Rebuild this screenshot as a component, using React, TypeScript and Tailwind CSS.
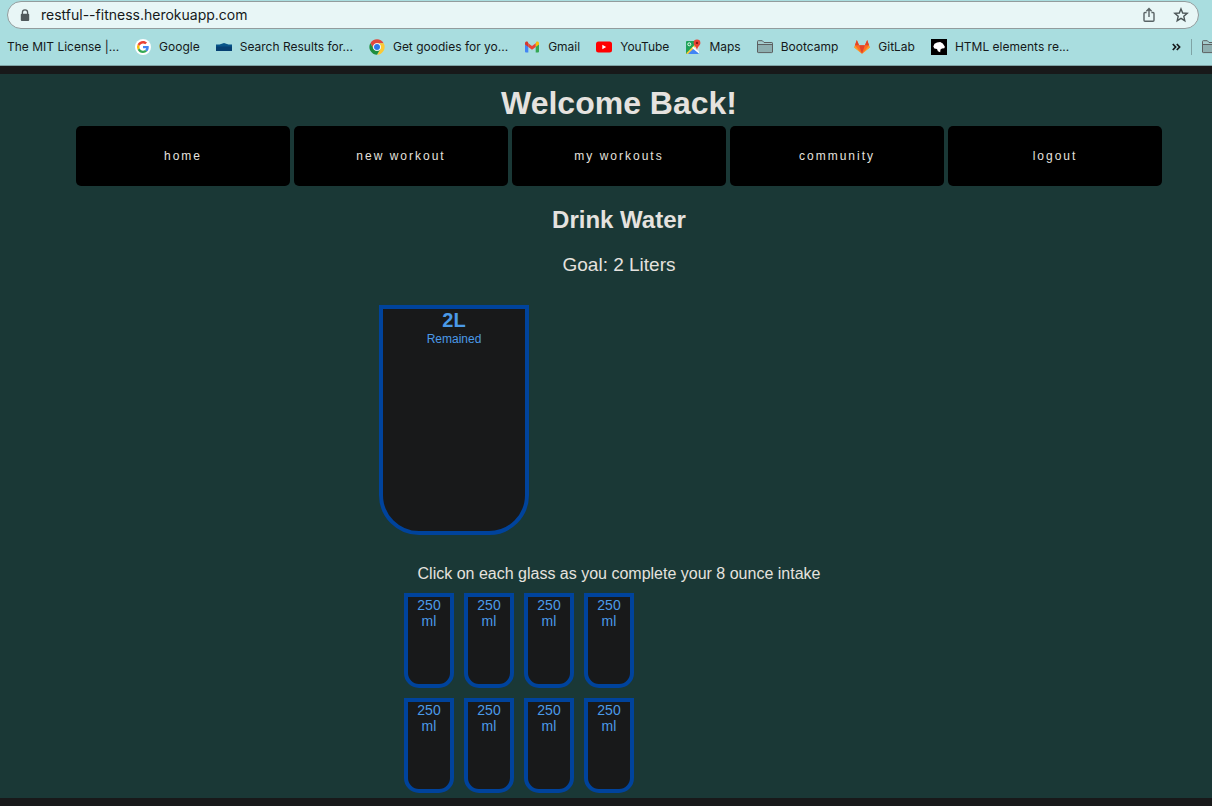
import type { ReactNode } from "react";

const ui = "font-['Inter','Noto_Sans',sans-serif]";

function LockIcon() {
  return (
    <svg width="10" height="13" viewBox="0 0 10 13" aria-hidden="true">
      <path d="M2.4 6V3.500a2.600 2.600 0 0 1 5.200 0V6" fill="none" stroke="#50595b" strokeWidth="1.300" />
      <rect x="0.800" y="4.800" width="8.400" height="7.200" rx="1" fill="#50595b" />
    </svg>
  );
}

function ShareIcon() {
  return (
    <svg width="16" height="16" viewBox="0 0 16 16" fill="none" stroke="#596365" strokeWidth="1.400" aria-hidden="true">
      <path d="M5.600 5.500H4a1 1 0 0 0-1 1v6.700a1 1 0 0 0 1 1h8a1 1 0 0 0 1-1V6.500a1 1 0 0 0-1-1h-1.600M8 10V1.800M5.400 4.200 8 1.600l2.600 2.600" />
    </svg>
  );
}

function StarIcon() {
  return (
    <svg width="16" height="16" viewBox="0 0 16 16" fill="none" stroke="#4b5557" strokeWidth="1.400" aria-hidden="true">
      <path d="M8 1.900 9.700 6l4.500.4-3.400 2.900 1 4.400L8 11.400l-3.800 2.300 1-4.400L1.800 6.400 6.300 6Z" />
    </svg>
  );
}

function GoogleIcon() {
  return (
    <svg width="16" height="16" viewBox="0 0 16 16" aria-hidden="true">
      <circle cx="8" cy="8" r="8" fill="#fff" />
      <g transform="translate(2 2) scale(0.25)">
        <path fill="#4285F4" d="M47 24.500c0-1.600-.2-3.200-.4-4.700H24v9h12.900c-.6 3-2.300 5.500-4.800 7.200l7.700 6C44.400 37.800 47 31.700 47 24.500Z" />
        <path fill="#34A853" d="M24 48c6.500 0 11.900-2.100 15.900-5.800l-7.700-6C30 37.700 27.200 38.500 24 38.500c-6.300 0-11.600-4.200-13.500-9.900l-8 6.200C6.500 42.600 14.600 48 24 48Z" />
        <path fill="#FBBC05" d="M10.500 28.600A14.500 14.500 0 0 1 10.500 19.400l-8-6.200a24 24 0 0 0 0 21.600Z" />
        <path fill="#EA4335" d="M24 9.500c3.500 0 6.700 1.200 9.200 3.600l6.900-6.900C35.900 2.400 30.500 0 24 0 14.600 0 6.500 5.400 2.500 13.200l8 6.200C12.400 13.700 17.700 9.500 24 9.500Z" />
      </g>
    </svg>
  );
}

function RoofIcon() {
  return (
    <svg width="16" height="16" viewBox="0 0 16 16" aria-hidden="true">
      <path d="M0 5.600h3.500L8 4l4.500 1.600H16V8H0Z" fill="#075489" />
      <path d="M0 7.500h16V12H0Z" fill="#053f72" />
    </svg>
  );
}

function ChromeIcon() {
  return (
    <svg width="16" height="16" viewBox="0 0 48 48" aria-hidden="true">
      <path d="M4.100 12.500A23 23 0 0 1 43.900 12.500H24A11.500 11.500 0 0 0 14 29.800Z" fill="#e0483c" />
      <path d="M43.900 12.500A23 23 0 0 1 24 47L34 29.800A11.500 11.500 0 0 0 24 12.500Z" fill="#fcc934" />
      <path d="M24 47A23 23 0 0 1 4.100 12.500L14 29.800A11.500 11.500 0 0 0 34 29.800Z" fill="#1e8e3e" />
      <circle cx="24" cy="24" r="11.500" fill="#fff" />
      <circle cx="24" cy="24" r="9" fill="#2c78e8" />
    </svg>
  );
}

function GmailIcon() {
  return (
    <svg width="16" height="16" viewBox="0 0 16 16" aria-hidden="true">
      <path d="M1 5v7.500q0 1 1 1h2.300V7Z" fill="#4285f4" />
      <path d="M15 5v7.500q0 1-1 1h-2.300V7Z" fill="#34a853" />
      <path d="M11.700 4.200V8L15 5.600V4.200c0-1.500-1.600-2.200-2.700-1.400Z" fill="#fbbc04" />
      <path d="M4.300 4.200V8L8 10.800 11.700 8V4.200L8 7Z" fill="#ea4335" />
      <path d="M4.300 4.200V8L1 5.600V4.200c0-1.500 1.600-2.200 2.700-1.400Z" fill="#d6382b" />
    </svg>
  );
}

function YouTubeIcon() {
  return (
    <svg width="16" height="16" viewBox="0 0 16 16" aria-hidden="true">
      <rect y="2.500" width="16" height="11" rx="2.500" fill="#f00" />
      <path d="M6.300 5.800v4.400L10.200 8Z" fill="#fff" />
    </svg>
  );
}

function MapsIcon() {
  return (
    <svg width="16" height="16" viewBox="0 0 16 16" aria-hidden="true">
      <path d="M1 3q0-1 1-1h8l3 5L2 15q-1 0-1-1Z" fill="#1ea35a" />
      <path d="M2 15 8.500 8.500 14 14q-.3 1-1 1Z" fill="#4285f4" />
      <path d="M9 8l4-3 1 2v7Z" fill="#d5dce0" />
      <path d="M1.200 14.200 10 5.400l1.400 1.400L3 15H2Z" fill="#fbcb3b" />
      <path d="m7 9 1.500-1.500L14 13v1.600Z" fill="#fff" />
      <circle cx="4.300" cy="5.300" r="1.500" fill="none" stroke="#fff" strokeWidth=".9" />
      <path d="M12 .6a3.400 3.400 0 0 1 3.400 3.400c0 2.500-2.700 3.400-3.400 7-.7-3.600-3.400-4.500-3.400-7A3.400 3.400 0 0 1 12 .6Z" fill="#e84435" />
      <circle cx="12" cy="3.900" r="1.200" fill="#7e1d16" />
    </svg>
  );
}

function FolderIcon() {
  return (
    <svg width="16" height="14" viewBox="0 0 16 14" aria-hidden="true" className="shrink-0">
      <path d="M.5 12V1.500q0-.8.8-.8h4L7 2.500h7.800q.7 0 .7.700V12q0 .6-.7.600H1.200Q.5 12.600.5 12Z" fill="#a5cccd" stroke="#5c5f60" />
      <path d="M1 5h14v7H1Z" fill="#8eafb0" />
      <path d="M.5 4.500h15" stroke="#5c5f60" />
    </svg>
  );
}

function GitLabIcon() {
  return (
    <svg width="16" height="16" viewBox="0 0 16 16" aria-hidden="true">
      <path d="M2.800 1 .3 8.600 8 14.700l7.700-6.100L13.200 1l-2.300 5.200H5.100Z" fill="#fc6d26" />
      <path d="M5.100 6.200h5.800L8 14.700Z" fill="#e24329" />
      <path d="M2.800 1 .9 6.300h4.200ZM13.200 1l1.900 5.300h-4.200Z" fill="#e24329" />
      <path d="M.9 6.500.3 8.600 8 14.700ZM15.100 6.500l.6 2.100L8 14.700Z" fill="#fca326" />
    </svg>
  );
}

function MdnIcon() {
  return (
    <svg width="16" height="16" viewBox="0 0 16 16" aria-hidden="true">
      <path d="M0 0h16v16H0Z" fill="#000" />
      <path d="M2.300 7.500 3.500 4.800 6 3.400l3.200-.3 2.600 1.400 2.100 3.300-.6 1.400-2.300.2-1.500 1-.3 2.800-2.300-1-.9-2.200-2.600-.6Z" fill="#fff" />
    </svg>
  );
}

const bookmarks: { label: string; icon?: ReactNode }[] = [
  { label: "The MIT License |..." },
  { label: "Google", icon: <GoogleIcon /> },
  { label: "Search Results for...", icon: <RoofIcon /> },
  { label: "Get goodies for yo...", icon: <ChromeIcon /> },
  { label: "Gmail", icon: <GmailIcon /> },
  { label: "YouTube", icon: <YouTubeIcon /> },
  { label: "Maps", icon: <MapsIcon /> },
  { label: "Bootcamp", icon: <FolderIcon /> },
  { label: "GitLab", icon: <GitLabIcon /> },
  { label: "HTML elements re...", icon: <MdnIcon /> },
];

const links = ["home", "new workout", "my workouts", "community", "logout"];
const glasses = [1, 2, 3, 4, 5, 6, 7, 8];

function BrowserBar() {
  return (
    <header className={`overflow-hidden border-b border-[#7fa3a5] bg-[#a9dddf] text-[#15191a] ${ui}`}>
      <div className="ml-[7px] mr-[13px] mt-px flex h-7 items-center rounded-full border border-[#929c9d] bg-[#e8f6f6] pl-3 pr-[9px]">
        <LockIcon />
        <input
          aria-label="Address"
          defaultValue="restful--fitness.herokuapp.com"
          className="ml-[11px] min-w-0 flex-1 bg-transparent text-sm outline-none"
        />
        <div className="flex gap-4">
          <button aria-label="Share"><ShareIcon /></button>
          <button aria-label="Bookmark this page"><StarIcon /></button>
        </div>
      </div>
      <nav aria-label="Bookmarks" className="flex h-9 items-center pl-[7px] text-xs">
        <div className="flex items-center gap-4 whitespace-nowrap">
          {bookmarks.map((b) => (
            <a key={b.label} href="#" className="flex items-center gap-2">
              {b.icon}
              {b.label}
            </a>
          ))}
        </div>
        <div className="ml-auto -mr-[6px] flex shrink-0 items-center gap-[10px]">
          <button aria-label="More bookmarks">
            <svg width="9" height="8" viewBox="0 0 9 8" fill="none" stroke="#15191a" strokeWidth="1.700" aria-hidden="true">
              <path d="m.8 1 2.800 3-2.800 3M4.800 1l2.800 3-2.800 3" />
            </svg>
          </button>
          <span className="h-4 w-px bg-[#7fa3a5]" />
          <button aria-label="Other bookmarks"><FolderIcon /></button>
        </div>
      </nav>
    </header>
  );
}

export default function App() {
  return (
    <div className="min-h-screen bg-[#18191a]">
      <BrowserBar />
      <main className="mt-2 bg-[#1a3836] pb-[5px] pl-[26px] text-center font-['Liberation_Sans',Arial,sans-serif] text-[#e5e2df]">
        <div className="px-[50px]">
          <h1 className="pb-[5px] pt-[11px] text-[32px] leading-9 font-bold">Welcome Back!</h1>
          <nav aria-label="Main" className="grid grid-cols-5 gap-1">
            {links.map((l) => (
              <a key={l} href="#" className="flex h-[60px] items-center justify-center rounded-[5px] bg-black text-xs tracking-[2px]">
                {l}
              </a>
            ))}
          </nav>
        </div>
        <h2 className="mt-5 text-2xl leading-7 font-bold">Drink Water</h2>
        <p className="mt-5 text-[19px] leading-[22px]">Goal: 2 Liters</p>
        <section className="mx-auto mt-[29px] max-w-[480px]">
          <div className="h-[230px] w-[150px] rounded-b-[40px] border-4 border-[#00439c] bg-[#18191a] text-[#4b9ae8]">
            <div className="text-xl leading-[22px] font-bold">2L</div>
            <div className="text-xs leading-4">Remained</div>
          </div>
          <p className="mt-7 leading-[22px]">Click on each glass as you complete your 8 ounce intake</p>
          <div className="ml-[25px] mt-2 grid w-[230px] grid-cols-4 gap-[10px]">
            {glasses.map((g) => (
              <button
                key={g}
                aria-label={`Glass ${g}, 250 ml`}
                className="flex h-[95px] items-start justify-center rounded-b-[15px] border-4 border-[#00439c] bg-[#18191a] px-1 text-sm leading-4 text-[#4b9ae8]"
              >
                250 ml
              </button>
            ))}
          </div>
        </section>
      </main>
    </div>
  );
}
